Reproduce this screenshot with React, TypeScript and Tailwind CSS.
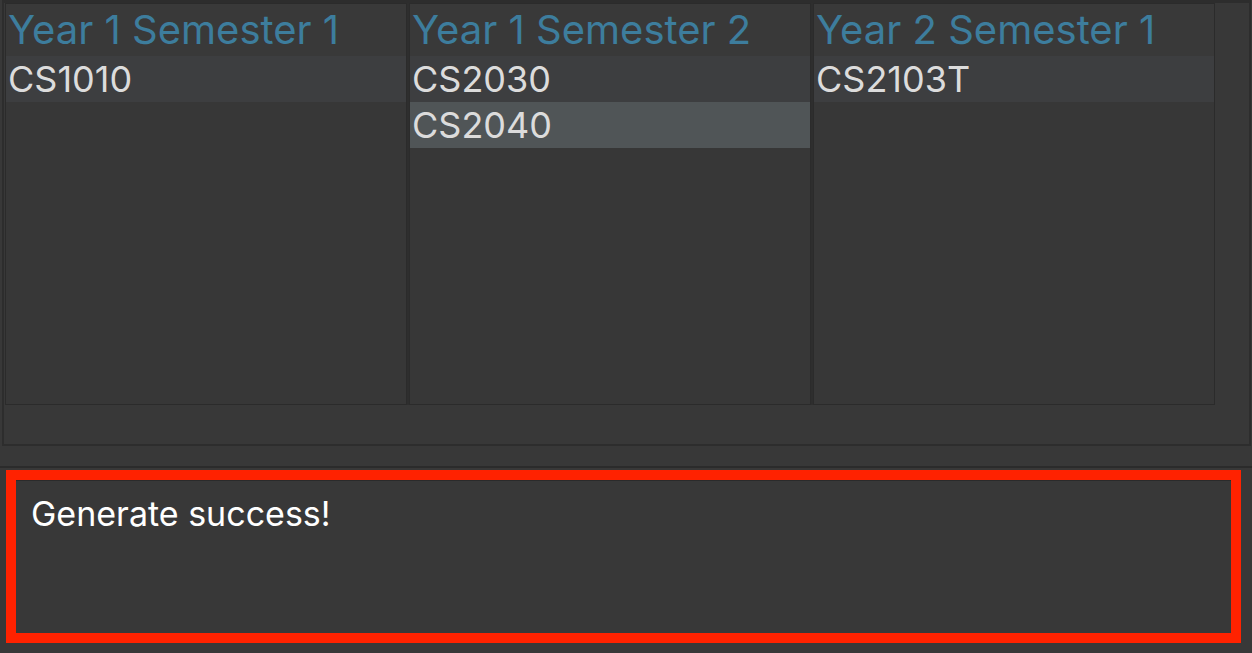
const semesters = [
  { title: "Year 1 Semester 1", modules: ["CS1010"] },
  { title: "Year 1 Semester 2", modules: ["CS2030", "CS2040"] },
  { title: "Year 2 Semester 1", modules: ["CS2103T"] },
];

function SemesterColumn({
  title,
  modules,
  selected,
}: {
  title: string;
  modules: string[];
  selected?: string;
}) {
  return (
    <div className="flex h-[402px] w-[402px] flex-col border border-[#2b2b2b] bg-[#373737]">
      <div className="h-[52px] bg-[#393939] pl-[2px] text-[40px] leading-[52px] text-[#3d7d9d]">
        {title}
      </div>
      {modules.map((m) => (
        <div
          key={m}
          className={
            m === selected
              ? "h-[46px] bg-[#505557] pl-[2px] text-[36px] leading-[46px] text-[#dcdcdc]"
              : "h-[46px] bg-[#3d3e40] pl-[2px] text-[36px] leading-[46px] text-[#dcdcdc]"
          }
        >
          {m}
        </div>
      ))}
    </div>
  );
}

export default function App() {
  return (
    <div
      className="flex h-[653px] w-[1252px] flex-col overflow-hidden bg-[#383838]"
      style={{ fontFamily: "Inter, 'Noto Sans', sans-serif" }}
    >
      {/* Semester board */}
      <div className="ml-[2px] mr-[1px] h-[446px] border-2 border-t-[3px] border-[#2d2d2d] pl-[1px]">
        <div className="flex w-max gap-[2px] bg-[#2e2e2e]">
          {semesters.map((s) => (
            <SemesterColumn
              key={s.title}
              title={s.title}
              modules={s.modules}
              selected="CS2040"
            />
          ))}
        </div>
      </div>

      {/* Result display */}
      <div className="mt-[20px] flex-1 border-t-2 border-[#2b2b2b]">
        <div className="ml-[6px] mr-[11px] mt-[2px] h-[173px] border-[10px] border-[#ff2200]">
          <div className="h-full border-t border-[#2b2b2b] pl-[15px] pt-[7px] text-[34px] text-white">
            Generate success!
          </div>
        </div>
      </div>
    </div>
  );
}
